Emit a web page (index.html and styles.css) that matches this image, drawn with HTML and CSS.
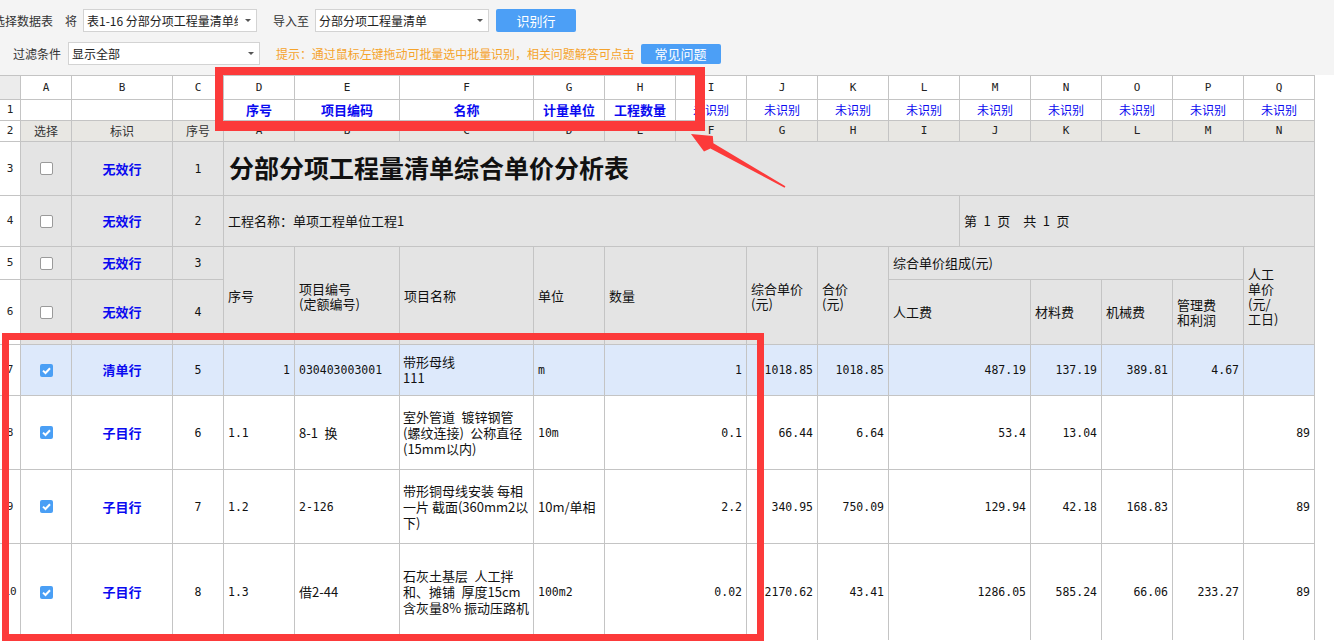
FILE: index.html
```html
<!DOCTYPE html>
<html lang="zh-CN">
<head>
<meta charset="utf-8">
<title>识别行</title>
<link rel="stylesheet" href="styles.css">
</head>
<body>
<div class="toolbar">
  <div class="tb-row">
    <span class="lbl lbl-first">选择数据表</span>
    <span class="lbl lbl-jiang">将</span>
    <div class="select s1"><span class="val">表1-16 分部分项工程量清单综合单价分析表</span><span class="caret"></span></div>
    <span class="lbl lbl-to">导入至</span>
    <div class="select s2"><span class="val">分部分项工程量清单</span><span class="caret"></span></div>
    <div class="btn btn-main">识别行</div>
  </div>
  <div class="tb-row">
    <span class="lbl lbl-filter">过滤条件</span>
    <div class="select s3"><span class="val">显示全部</span><span class="caret"></span></div>
    <span class="hint">提示：通过鼠标左键拖动可批量选中批量识别，相关问题解答可点击</span>
    <div class="btn btn-faq">常见问题</div>
  </div>
</div>

<div class="sheet">
  <!-- column letters -->
  <div class="c corner"></div>
  <div class="c hd">A</div><div class="c hd">B</div><div class="c hd">C</div><div class="c hd">D</div><div class="c hd">E</div><div class="c hd">F</div><div class="c hd">G</div><div class="c hd">H</div><div class="c hd">I</div><div class="c hd">J</div><div class="c hd">K</div><div class="c hd">L</div><div class="c hd">M</div><div class="c hd">N</div><div class="c hd">O</div><div class="c hd">P</div><div class="c hd">Q</div>

  <!-- row 1 -->
  <div class="c rn">1</div>
  <div class="c"></div><div class="c"></div><div class="c"></div>
  <div class="c ctr lb">序号</div>
  <div class="c ctr lb">项目编码</div>
  <div class="c ctr lb">名称</div>
  <div class="c ctr lb">计量单位</div>
  <div class="c ctr lb">工程数量</div>
  <div class="c ctr un">未识别</div><div class="c ctr un">未识别</div><div class="c ctr un">未识别</div><div class="c ctr un">未识别</div><div class="c ctr un">未识别</div><div class="c ctr un">未识别</div><div class="c ctr un">未识别</div><div class="c ctr un">未识别</div><div class="c ctr un">未识别</div>

  <!-- row 2 -->
  <div class="c rn">2</div>
  <div class="c g2 ctr t12">选择</div>
  <div class="c g2 ctr t12">标识</div>
  <div class="c g2 ctr t12">序号</div>
  <div class="c g2 hd">A</div><div class="c g2 hd">B</div><div class="c g2 hd">C</div><div class="c g2 hd">D</div><div class="c g2 hd">E</div><div class="c g2 hd">F</div><div class="c g2 hd">G</div><div class="c g2 hd">H</div><div class="c g2 hd">I</div><div class="c g2 hd">J</div><div class="c g2 hd">K</div><div class="c g2 hd">L</div><div class="c g2 hd">M</div><div class="c g2 hd">N</div>

  <!-- row 3 -->
  <div class="c rn">3</div>
  <div class="c gray ctr"><span class="cb"></span></div>
  <div class="c gray ctr lb">无效行</div>
  <div class="c gray ctr mn">1</div>
  <div class="c gray title span14">分部分项工程量清单综合单价分析表</div>

  <!-- row 4 -->
  <div class="c rn">4</div>
  <div class="c gray ctr"><span class="cb"></span></div>
  <div class="c gray ctr lb">无效行</div>
  <div class="c gray ctr mn">2</div>
  <div class="c gray span9">工程名称：单项工程单位工程1</div>
  <div class="c gray span5">第&ensp;1&ensp;页&ensp;&ensp;共&ensp;1&ensp;页</div>

  <!-- row 5 -->
  <div class="c rn">5</div>
  <div class="c gray ctr"><span class="cb"></span></div>
  <div class="c gray ctr lb">无效行</div>
  <div class="c gray ctr mn">3</div>
  <div class="c gray rs2">序号</div>
  <div class="c gray rs2 hl"><span>项目编号<br>(定额编号)</span></div>
  <div class="c gray rs2">项目名称</div>
  <div class="c gray rs2">单位</div>
  <div class="c gray rs2 span2">数量</div>
  <div class="c gray rs2 hl"><span>综合单价<br>(元)</span></div>
  <div class="c gray rs2 hl"><span>合价<br>(元)</span></div>
  <div class="c gray span5">综合单价组成(元)</div>
  <div class="c gray rs2 hl"><span>人工<br>单价<br>(元/<br>工日)</span></div>

  <!-- row 6 -->
  <div class="c rn">6</div>
  <div class="c gray ctr"><span class="cb"></span></div>
  <div class="c gray ctr lb">无效行</div>
  <div class="c gray ctr mn">4</div>
  <div class="c gray span2">人工费</div>
  <div class="c gray">材料费</div>
  <div class="c gray">机械费</div>
  <div class="c gray hl"><span>管理费<br>和利润</span></div>

  <!-- row 7 -->
  <div class="c rn">7</div>
  <div class="c sel ctr"><span class="cb on"><svg viewBox="0 0 13 13" width="13" height="13"><path d="M3 6.6 L5.5 9 L10 4.2" fill="none" stroke="#fff" stroke-width="2"/></svg></span></div>
  <div class="c sel ctr lb">清单行</div>
  <div class="c sel ctr mn">5</div>
  <div class="c sel r mn">1</div>
  <div class="c sel mn">030403003001</div>
  <div class="c sel desc"><span>带形母线<br>111</span></div>
  <div class="c sel mn">m</div>
  <div class="c sel r mn span2">1</div>
  <div class="c sel r mn">1018.85</div>
  <div class="c sel r mn">1018.85</div>
  <div class="c sel r mn span2">487.19</div>
  <div class="c sel r mn">137.19</div>
  <div class="c sel r mn">389.81</div>
  <div class="c sel r mn">4.67</div>
  <div class="c sel"></div>

  <!-- row 8 -->
  <div class="c rn">8</div>
  <div class="c ctr"><span class="cb on"><svg viewBox="0 0 13 13" width="13" height="13"><path d="M3 6.6 L5.5 9 L10 4.2" fill="none" stroke="#fff" stroke-width="2"/></svg></span></div>
  <div class="c ctr lb">子目行</div>
  <div class="c ctr mn">6</div>
  <div class="c mn">1.1</div>
  <div class="c">8-1&ensp;换</div>
  <div class="c desc"><span>室外管道&ensp;镀锌钢管<br>(螺纹连接)&ensp;公称直径<br>(15mm以内)</span></div>
  <div class="c mn">10m</div>
  <div class="c r mn span2">0.1</div>
  <div class="c r mn">66.44</div>
  <div class="c r mn">6.64</div>
  <div class="c r mn span2">53.4</div>
  <div class="c r mn">13.04</div>
  <div class="c"></div>
  <div class="c"></div>
  <div class="c r mn">89</div>

  <!-- row 9 -->
  <div class="c rn">9</div>
  <div class="c ctr"><span class="cb on"><svg viewBox="0 0 13 13" width="13" height="13"><path d="M3 6.6 L5.5 9 L10 4.2" fill="none" stroke="#fff" stroke-width="2"/></svg></span></div>
  <div class="c ctr lb">子目行</div>
  <div class="c ctr mn">7</div>
  <div class="c mn">1.2</div>
  <div class="c mn">2-126</div>
  <div class="c desc"><span>带形铜母线安装 每相<br>一片 截面(360mm2以<br>下)</span></div>
  <div class="c">10m/单相</div>
  <div class="c r mn span2">2.2</div>
  <div class="c r mn">340.95</div>
  <div class="c r mn">750.09</div>
  <div class="c r mn span2">129.94</div>
  <div class="c r mn">42.18</div>
  <div class="c r mn">168.83</div>
  <div class="c"></div>
  <div class="c r mn">89</div>

  <!-- row 10 -->
  <div class="c rn">10</div>
  <div class="c ctr"><span class="cb on"><svg viewBox="0 0 13 13" width="13" height="13"><path d="M3 6.6 L5.5 9 L10 4.2" fill="none" stroke="#fff" stroke-width="2"/></svg></span></div>
  <div class="c ctr lb">子目行</div>
  <div class="c ctr mn">8</div>
  <div class="c mn">1.3</div>
  <div class="c">借2-44</div>
  <div class="c desc"><span>石灰土基层&ensp;人工拌<br>和、摊铺&ensp;厚度15cm<br>含灰量8% 振动压路机</span></div>
  <div class="c mn">100m2</div>
  <div class="c r mn span2">0.02</div>
  <div class="c r mn">2170.62</div>
  <div class="c r mn">43.41</div>
  <div class="c r mn span2">1286.05</div>
  <div class="c r mn">585.24</div>
  <div class="c r mn">66.06</div>
  <div class="c r mn">233.27</div>
  <div class="c r mn">89</div>
</div>

<div class="mark mark1"></div>
<div class="mark mark2"></div>
<svg class="arrow" width="120" height="70" viewBox="0 0 120 70">
  <polygon points="11,9 32.8,11 33.4,18.2 105.4,61.3 104.6,62.7 30.4,23.4 24,26.6" fill="#fc3a3a"/>
</svg>
</body>
</html>
```

FILE: styles.css
```css
html, body {
  margin: 0;
  padding: 0;
}
body {
  position: relative;
  width: 1334px;
  height: 642px;
  overflow: hidden;
  background: #fff;
  font-family: "Noto Sans CJK SC", sans-serif;
}

/* ---------- toolbar ---------- */
.toolbar {
  height: 75px;
  box-sizing: border-box;
  padding-top: 9px;
  background: #f4f4f4;
  display: flex;
  flex-direction: column;
  gap: 10px;
  font-size: 12px;
  color: #333;
  overflow: hidden;
}
.tb-row {
  display: flex;
  align-items: center;
  height: 23px;
}
.lbl {
  line-height: 16px;
  white-space: nowrap;
}
.lbl-first { margin-left: -7px; }
.lbl-jiang { margin-left: 12px; }
.lbl-to { margin-left: 16px; }
.lbl-filter { margin-left: 13px; }

.select {
  box-sizing: border-box;
  height: 23px;
  background: #fff;
  border: 1px solid #d3d3d3;
  display: flex;
  align-items: center;
  margin-left: 6px;
  color: #222;
}
.select .val {
  flex: 1;
  min-width: 0;
  overflow: hidden;
  white-space: nowrap;
  padding-left: 3px;
  line-height: 16px;
}
.select .caret {
  width: 0;
  height: 0;
  border-left: 3px solid transparent;
  border-right: 3px solid transparent;
  border-top: 3px solid #555;
  margin-left: 7px;
  margin-right: 5px;
  flex: none;
}
.s1 { width: 174px; }
.s2 { width: 174px; }
.s3 { width: 192px; margin-left: 7px; }

.btn {
  box-sizing: border-box;
  width: 80px;
  background: #4c9ff6;
  color: #fff;
  border-radius: 2px;
  display: flex;
  align-items: center;
  justify-content: center;
  font-size: 13px;
}
.btn-main {
  height: 23px;
  margin-left: 7px;
}
.btn-faq {
  height: 20px;
  margin-left: 6px;
}
.hint {
  margin-left: 16px;
  color: #f5a32c;
  white-space: nowrap;
  line-height: 16px;
  letter-spacing: -0.05px;
}

/* ---------- sheet ---------- */
.sheet {
  display: grid;
  grid-template-columns: 20px 50px 100px 50px 70px 104px 133px 70px 70px repeat(9, 70px);
  grid-template-rows: 23px 20px 20px 53px 50px 32px 64px 50px 73px 73px 96px;
  gap: 1px;
  width: max-content;
  background: #c4c4c4;
  border-top: 1px solid #c4c4c4;
  border-right: 1px solid #c4c4c4;
}
.c {
  background: #fff;
  display: flex;
  align-items: center;
  padding: 0 4px;
  overflow: hidden;
  white-space: nowrap;
  font-size: 13px;
  line-height: 16px;
  color: #111;
  min-width: 0;
}
.desc {
  padding: 0 2px 0 3px;
}
.ctr { justify-content: center; }
.r { justify-content: flex-end; }
.hl { line-height: 15px; }

.corner { background: #ececec; }
.hd {
  justify-content: center;
  font-family: "DejaVu Sans Mono", monospace;
  font-size: 11px;
  color: #222;
}
.rn {
  justify-content: center;
  padding: 0;
  font-family: "DejaVu Sans Mono", monospace;
  font-size: 11px;
  color: #222;
}
.mn {
  font-family: "DejaVu Sans Mono", "Noto Sans CJK SC", monospace;
  font-size: 11.5px;
}
.t12 {
  font-size: 12px;
  color: #333;
}
.g2 { background: #e8e7e3; }
.gray { background: #e4e4e4; }
.sel { background: #dde9fb; }

.lb {
  color: #0a0af0;
  font-weight: bold;
}
.un {
  color: #0a0af0;
  font-size: 12px;
}
.title {
  font-size: 25px;
  font-weight: bold;
  color: #111;
  padding-left: 5px;
  padding-bottom: 4px;
}

.span2 { grid-column: span 2; }
.span5 { grid-column: span 5; }
.span9 { grid-column: span 9; }
.span14 { grid-column: span 14; }
.rs2 { grid-row: span 2; }

.cb {
  display: block;
  width: 13px;
  height: 13px;
  box-sizing: border-box;
  border: 1px solid #9a9a9a;
  border-radius: 2px;
  background: #fff;
}
.cb.on {
  border: none;
  background: #4a9ff5;
}
.cb svg { display: block; }

/* ---------- annotations ---------- */
.mark {
  position: absolute;
  box-sizing: border-box;
  border-style: solid;
  border-color: #fc3a3a;
  pointer-events: none;
}
.mark1 {
  left: 215px;
  top: 67px;
  width: 490px;
  height: 64px;
  border-width: 8px 10px 10px 8px;
}
.mark2 {
  left: 2px;
  top: 333px;
  width: 762px;
  height: 308px;
  border-width: 7px;
}
.arrow {
  position: absolute;
  left: 680px;
  top: 125px;
  pointer-events: none;
}
```
